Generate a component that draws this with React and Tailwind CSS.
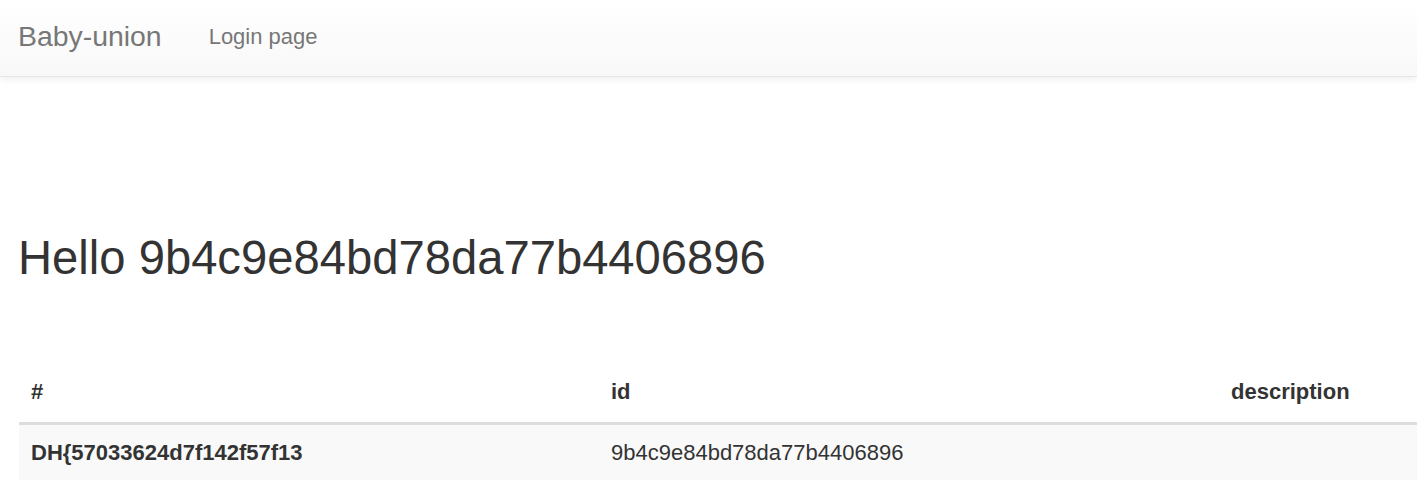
import React from "react";

const rows = [
  { num: "DH{57033624d7f142f57f13", id: "9b4c9e84bd78da77b4406896", description: "" },
];

export default function App() {
  return (
    <div
      className="min-h-[493px] w-[1417px] overflow-hidden bg-white text-[#333]"
      style={{ fontFamily: '"Liberation Sans", Arial, Helvetica, sans-serif' }}
    >
      {/* navbar */}
      <nav className="flex h-[77px] items-start border-b border-[#e7e7e7] bg-gradient-to-b from-white to-[#f8f8f8] shadow-[0_2px_8px_rgba(0,0,0,0.075)]">
        <a className="pl-[18px] pr-[23.5px] pt-[21px] text-[28.4px] leading-[31px] text-[#777]">
          Baby-union
        </a>
        <ul className="flex">
          <li>
            <a className="block px-[23.5px] pt-[21px] text-[22px] leading-[31px] text-[#777]">
              Login page
            </a>
          </li>
        </ul>
      </nav>

      {/* content */}
      <div className="pl-[18px]">
        <h2 className="mt-[155px] text-[47.2px] font-normal leading-[52px]">
          Hello 9b4c9e84bd78da77b4406896
        </h2>
      </div>

      <div className="mt-[80px] pl-[19px]">
        <table className="w-[1398px] table-fixed border-collapse text-left text-[22px] leading-[31px]">
          <colgroup>
            <col className="w-[580px]" />
            <col className="w-[620px]" />
            <col />
          </colgroup>
          <thead>
            <tr>
              <th className="border-b-[3px] border-[#ddd] px-[12px] pb-[15px] pt-[12px] align-bottom font-bold">#</th>
              <th className="border-b-[3px] border-[#ddd] px-[12px] pb-[15px] pt-[12px] align-bottom font-bold">id</th>
              <th className="border-b-[3px] border-[#ddd] px-[12px] pb-[15px] pt-[12px] align-bottom font-bold">description</th>
            </tr>
          </thead>
          <tbody>
            {rows.map((r, i) => (
              <tr key={i} className="bg-[#f9f9f9]">
                <th className="px-[12px] py-[12px] align-top font-bold">{r.num}</th>
                <td className="px-[12px] py-[12px] align-top">{r.id}</td>
                <td className="px-[12px] py-[12px] align-top">{r.description}</td>
              </tr>
            ))}
          </tbody>
        </table>
      </div>
    </div>
  );
}
